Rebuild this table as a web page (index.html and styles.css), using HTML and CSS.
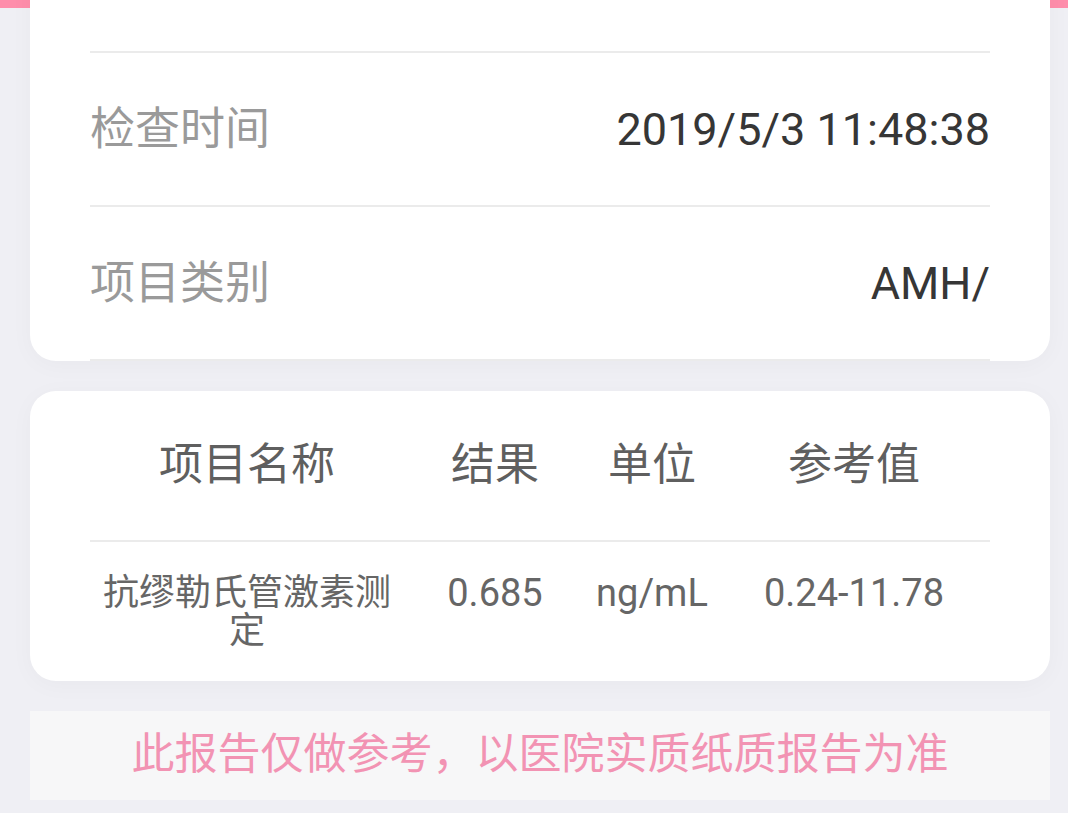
FILE: index.html
```html
<!DOCTYPE html>
<html lang="zh-CN">
<head>
    <meta charset="UTF-8">
    <meta name="viewport" content="width=device-width, initial-scale=1.0">
    <title>检查报告</title>
    <link rel="stylesheet" href="styles.css">
</head>
<body>
    <div class="page">
        <!-- 基本信息（上方一行已滚出屏幕） -->
        <div class="card info">
            <div class="info-row"></div>
            <div class="info-row">
                <span class="label">检查时间</span>
                <span class="value">2019/5/3 11:48:38</span>
            </div>
            <div class="info-row">
                <span class="label">项目类别</span>
                <span class="value">AMH/</span>
            </div>
        </div>

        <!-- 检查结果 -->
        <div class="card result">
            <div class="result-row head">
                <div>项目名称</div>
                <div>结果</div>
                <div>单位</div>
                <div>参考值</div>
            </div>
            <div class="result-row">
                <div class="name">抗缪勒氏管激素测定</div>
                <div class="num">0.685</div>
                <div class="num">ng/mL</div>
                <div class="num">0.24-11.78</div>
            </div>
        </div>

        <div class="notice">此报告仅做参考，以医院实质纸质报告为准</div>
    </div>
</body>
</html>
```

FILE: styles.css
```css
body {
    margin: 0;
    font-family: Roboto, "Noto Sans CJK SC", sans-serif;
    background: linear-gradient(#fe8dab 0, #fe8dab 8px, #efeff4 8px);
    min-height: 100vh;
}

.page {
    width: 1020px;
    margin-left: 30px;
    display: flex;
    flex-direction: column;
    gap: 30px;
}

.card {
    background: #fff;
    border-radius: 26px;
    box-shadow: 0 4px 24px rgba(0, 0, 0, 0.03);
    padding: 0 60px;
}

/* 信息卡片，页面已向上滚动 */
.card.info {
    margin-top: -101px;
    border-top-left-radius: 0;
    border-top-right-radius: 0;
}

.info-row {
    height: 152px;
    display: flex;
    align-items: center;
    justify-content: space-between;
    border-bottom: 2px solid #ebebeb;
    font-size: 45px;
}

.label {
    color: #9a9a9a;
    padding-bottom: 7px;
}

.value {
    color: #363636;
}

.result-row {
    display: grid;
    grid-template-columns: 314px 182px 132px 272px;
    text-align: center;
    color: #666;
}

.result-row.head {
    height: 149px;
    align-items: center;
    font-size: 44px;
    color: #5f5f5f;
    border-bottom: 2px solid #ebebeb;
}

.result-row.head div {
    padding-bottom: 10px;
}

.result-row:not(.head) {
    font-size: 36px;
    line-height: 38px;
    padding: 32px 0 31px;
}

.result-row .num {
    font-size: 38px;
}

.result-row .name {
    padding: 0 10px;
}

.notice {
    background: #f7f7f8;
    height: 89px;
    box-sizing: border-box;
    padding-bottom: 12px;
    display: flex;
    align-items: center;
    justify-content: center;
    color: #f293b3;
    font-size: 43px;
    font-family: "Noto Sans CJK SC", sans-serif;
}
```
